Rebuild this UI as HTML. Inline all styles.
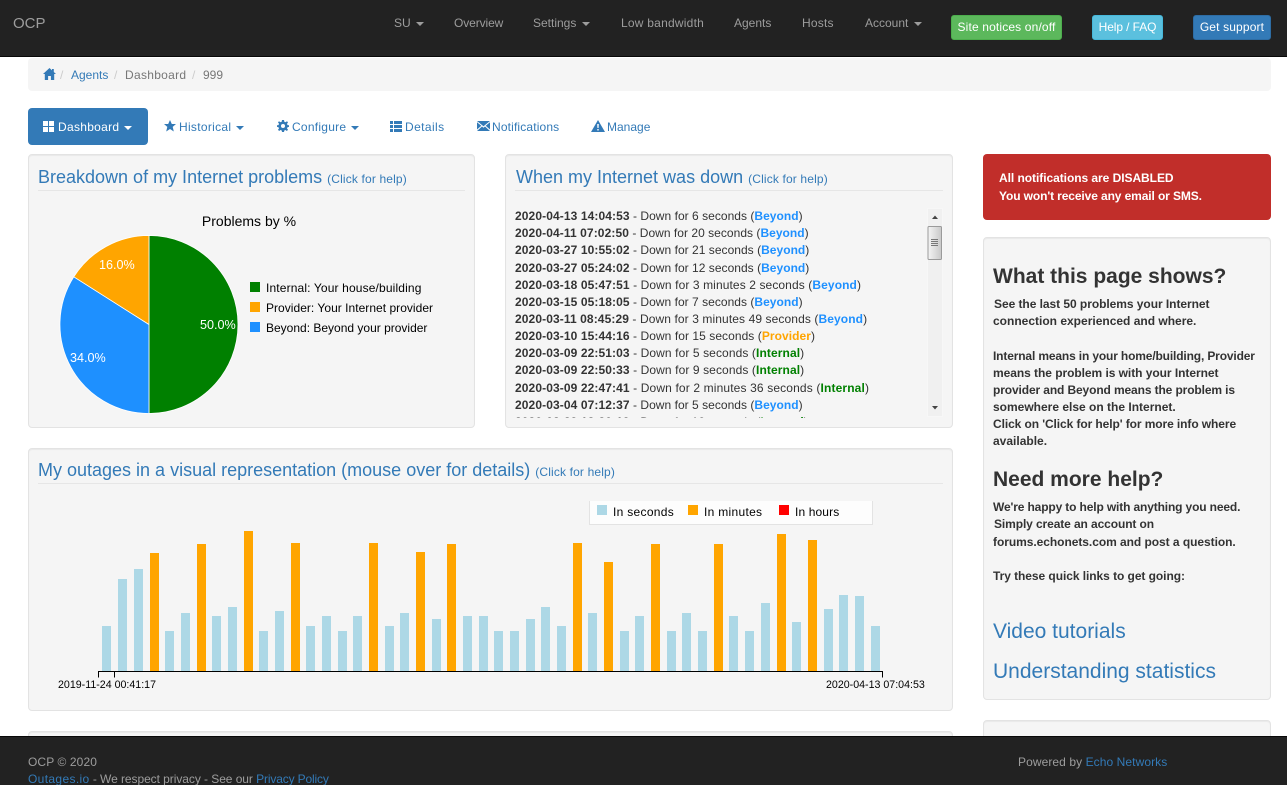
<!DOCTYPE html>
<html lang="en"><head><meta charset="utf-8"><title>OCP Dashboard</title>
<style>
*{box-sizing:border-box}
html,body{margin:0;padding:0;width:1287px;height:785px;overflow:hidden;background:#fff}
body{font-family:"Liberation Sans",Arial,sans-serif;font-size:12px;color:#333;position:relative}
.t{position:absolute;white-space:nowrap;line-height:17px}
a,.l{color:#337ab7;text-decoration:none}
.nav{position:absolute;left:0;top:0;width:1287px;height:57px;background:#222;border-bottom:1px solid #080808}
.nl{position:absolute;top:15px;color:#9d9d9d;font-size:12px;line-height:17px;white-space:nowrap}
.caret{display:inline-block;width:0;height:0;margin-left:2px;vertical-align:middle;border-top:4px solid;border-left:4px solid transparent;border-right:4px solid transparent}
.btn{position:absolute;top:15px;height:25px;border-radius:3px;color:#fff;font-size:12px;line-height:23px;text-align:center;border:1px solid;white-space:nowrap}
.crumb{position:absolute;left:28px;top:58px;width:1243px;height:33px;background:#f5f5f5;border-radius:4px}
.well{position:absolute;background:#f5f5f5;border:1px solid #e3e3e3;border-radius:4px;box-shadow:inset 0 1px 1px rgba(0,0,0,.05)}
.h{position:absolute;font-size:18px;line-height:20px;color:#337ab7;white-space:nowrap}
.h small{font-size:12px;color:#337ab7;letter-spacing:.15px}
.hr{position:absolute;height:1px;background:#e6e6e6}
.row{position:absolute;left:0;white-space:nowrap;line-height:17px;color:#333}
.row b{color:#333;letter-spacing:.1px}.B{color:#1e90ff;font-weight:bold}.P{color:#ffa500;font-weight:bold}.I{color:#008000;font-weight:bold}
.side{position:absolute;left:993px;white-space:nowrap;font-weight:bold;line-height:17px;color:#333}
.foot{position:absolute;left:0;top:736px;width:1287px;height:49px;background:#222;border-top:1px solid #080808}
.foot .t{color:#9d9d9d}
</style></head><body>

<div class="nav">
<div class="t" style="left:13px;top:14px;font-size:15px;line-height:20px;color:#9d9d9d">OCP</div>
<div class="nl" style="left:394px">SU <span class="caret"></span></div>
<div class="nl" style="left:454px;letter-spacing:-.1px">Overview</div>
<div class="nl" style="left:533px">Settings <span class="caret"></span></div>
<div class="nl" style="left:621px;letter-spacing:.23px">Low bandwidth</div>
<div class="nl" style="left:734px">Agents</div>
<div class="nl" style="left:802px;letter-spacing:.2px">Hosts</div>
<div class="nl" style="left:865px">Account <span class="caret"></span></div>
<div class="btn" style="left:951px;width:111px;background:#5cb85c;border-color:#4cae4c;letter-spacing:.15px">Site notices on/off</div>
<div class="btn" style="left:1092px;width:71px;background:#5bc0de;border-color:#46b8da;letter-spacing:-.1px">Help / FAQ</div>
<div class="btn" style="left:1193px;width:78px;background:#337ab7;border-color:#2e6da4;letter-spacing:.15px">Get support</div>
</div>

<div class="crumb"></div>
<svg style="position:absolute;left:43px;top:68px" width="13" height="12" viewBox="0 0 13 12"><path fill="#337ab7" d="M6.500 0L0 6h1.800v6h3.300V8h2.800v4h3.300V6H13L10.800 4V1H9v1.400z"/></svg>
<div class="t" style="left:60px;top:66.500px;color:#ccc">/</div>
<div class="t" style="left:71px;top:66.500px;color:#337ab7">Agents</div>
<div class="t" style="left:114px;top:66.500px;color:#ccc">/</div>
<div class="t" style="left:125px;top:66.500px;color:#777;letter-spacing:.3px">Dashboard</div>
<div class="t" style="left:192px;top:66.500px;color:#ccc">/</div>
<div class="t" style="left:203px;top:66.500px;color:#777">999</div>

<div style="position:absolute;left:28px;top:108px;width:120px;height:37px;background:#337ab7;border-radius:4px"></div>
<svg style="position:absolute;left:43px;top:121px" width="11" height="11" viewBox="0 0 11 11"><path fill="#fff" d="M0 0h5v5H0zM6 0h5v5H6zM0 6h5v5H0zM6 6h5v5H6z"/></svg>
<div class="t" style="left:58px;top:119px;color:#fff;letter-spacing:.3px">Dashboard <span class="caret" style="margin-left:1px"></span></div>
<svg style="position:absolute;left:164px;top:120px" width="12" height="12" viewBox="0 0 12 12"><path fill="#337ab7" d="M6 0l1.800 4H12L8.700 6.900 9.800 11.500 6 9 2.200 11.500 3.300 6.900 0 4h4.200z"/></svg>
<div class="t" style="left:179px;top:119px;color:#337ab7;letter-spacing:.3px">Historical <span class="caret" style="margin-left:1px"></span></div>
<svg style="position:absolute;left:277px;top:120px" width="12" height="12" viewBox="0 0 12 12"><path fill="#337ab7" fill-rule="evenodd" d="M5 0h2l.3 1.700 1.300.5L10 1.200 11 2.400l-1 1.400.5 1.300L12 5.300v1.600l-1.500.3-.5 1.200 1 1.400L9.900 11l-1.400-1-1.200.5L7 12H5l-.3-1.500L3.500 10l-1.400 1L1 9.800l1-1.400-.5-1.200L0 6.900V5.300l1.500-.2.500-1.300-1-1.400 1-1.200 1.400 1 1.300-.5zM6 4a2 2 0 100 4 2 2 0 000-4z"/></svg>
<div class="t" style="left:292px;top:119px;color:#337ab7;letter-spacing:.25px">Configure <span class="caret" style="margin-left:1px"></span></div>
<svg style="position:absolute;left:390px;top:121px" width="12" height="11" viewBox="0 0 12 11"><path fill="#337ab7" d="M0 0h3v3H0zM4 0h8v3H4zM0 4h3v3H0zM4 4h8v3H4zM0 8h3v3H0zM4 8h8v3H4z"/></svg>
<div class="t" style="left:405px;top:119px;color:#337ab7;letter-spacing:.4px">Details</div>
<svg style="position:absolute;left:477px;top:121px" width="13" height="10" viewBox="0 0 13 10"><path fill="#337ab7" d="M0 0h13L6.500 5.300zM0 1.300v7.200l4.300-3.700zM13 1.300v7.200L8.700 4.800zM0 10l5-4.500 1.500 1.200L8 5.500 13 10z"/></svg>
<div class="t" style="left:492px;top:119px;color:#337ab7;letter-spacing:.15px">Notifications</div>
<svg style="position:absolute;left:591px;top:120px" width="14" height="12" viewBox="0 0 14 12"><path fill="#337ab7" fill-rule="evenodd" d="M7 0l7 12H0zM6.200 4l.2 4h1.200l.2-4zM6.300 9v1.500h1.400V9z"/></svg>
<div class="t" style="left:607px;top:119px;color:#337ab7">Manage</div>

<!-- Breakdown well -->
<div class="well" style="left:28px;top:154px;width:447px;height:274px"></div>
<div class="h" style="left:38px;top:167px">Breakdown of my Internet problems <small>(Click for help)</small></div>
<div class="hr" style="left:38px;top:190px;width:427px"></div>
<svg style="position:absolute;left:28px;top:190px;overflow:visible" width="447" height="238">
<text x="221" y="36" text-anchor="middle" font-family="Liberation Sans" font-size="14" fill="#000">Problems by %</text>
<path d="M121 134.500V45.500A89 89 0 0 1 121 223.500Z" fill="#008000" stroke="#fff" stroke-width=".8"/>
<path d="M121 134.500V223.500A89 89 0 0 1 45.800 86.800Z" fill="#1e90ff" stroke="#fff" stroke-width=".8"/>
<path d="M121 134.500L45.800 86.800A89 89 0 0 1 121 45.500Z" fill="#ffa500" stroke="#fff" stroke-width=".8"/>
<g font-family="Liberation Sans" font-size="12.600" fill="#fff">
<text x="172" y="139">50.0%</text><text x="42" y="172">34.0%</text><text x="71" y="79">16.0%</text>
</g>
<rect x="222" y="92" width="10" height="10" fill="#008000"/><rect x="222" y="112" width="10" height="10" fill="#ffa500"/><rect x="222" y="132" width="10" height="10" fill="#1e90ff"/>
<g font-family="Liberation Sans" font-size="12" fill="#000">
<text x="238" y="102" letter-spacing=".14">Internal: Your house/building</text>
<text x="238" y="122" letter-spacing=".03">Provider: Your Internet provider</text>
<text x="238" y="142">Beyond: Beyond your provider</text>
</g>
</svg>

<!-- Down list well -->
<div class="well" style="left:505px;top:154px;width:448px;height:274px"></div>
<div class="h" style="left:516px;top:167px">When my Internet was down <small>(Click for help)</small></div>
<div class="hr" style="left:515px;top:190px;width:428px"></div>
<div style="position:absolute;left:515px;top:208px;width:412px;height:210px;overflow:hidden">
<div class="row" style="top:0;letter-spacing:.03px"><b>2020-04-13 14:04:53</b> - Down for 6 seconds (<span class="B">Beyond</span>)</div>
<div class="row" style="top:17px;letter-spacing:.03px"><b>2020-04-11 07:02:50</b> - Down for 20 seconds (<span class="B">Beyond</span>)</div>
<div class="row" style="top:34px;letter-spacing:.03px"><b>2020-03-27 10:55:02</b> - Down for 21 seconds (<span class="B">Beyond</span>)</div>
<div class="row" style="top:52px;letter-spacing:.03px"><b>2020-03-27 05:24:02</b> - Down for 12 seconds (<span class="B">Beyond</span>)</div>
<div class="row" style="top:69px;letter-spacing:.1px"><b>2020-03-18 05:47:51</b> - Down for 3 minutes 2 seconds (<span class="B">Beyond</span>)</div>
<div class="row" style="top:86px;letter-spacing:.03px"><b>2020-03-15 05:18:05</b> - Down for 7 seconds (<span class="B">Beyond</span>)</div>
<div class="row" style="top:103px;letter-spacing:.1px"><b>2020-03-11 08:45:29</b> - Down for 3 minutes 49 seconds (<span class="B">Beyond</span>)</div>
<div class="row" style="top:120px;letter-spacing:.06px"><b>2020-03-10 15:44:16</b> - Down for 15 seconds (<span class="P">Provider</span>)</div>
<div class="row" style="top:137px;letter-spacing:.1px"><b>2020-03-09 22:51:03</b> - Down for 5 seconds (<span class="I">Internal</span>)</div>
<div class="row" style="top:154px;letter-spacing:.1px"><b>2020-03-09 22:50:33</b> - Down for 9 seconds (<span class="I">Internal</span>)</div>
<div class="row" style="top:172px;letter-spacing:.14px"><b>2020-03-09 22:47:41</b> - Down for 2 minutes 36 seconds (<span class="I">Internal</span>)</div>
<div class="row" style="top:189px;letter-spacing:.03px"><b>2020-03-04 07:12:37</b> - Down for 5 seconds (<span class="B">Beyond</span>)</div>
<div class="row" style="top:206px"><b>2020-02-29 18:30:19</b> - Down for 10 seconds (<span class="I">Internal</span>)</div>
</div>
<svg style="position:absolute;left:927px;top:208px" width="16" height="209" viewBox="0 0 16 209">
<defs><linearGradient id="th" x1="0" x2="1" y1="0" y2="0"><stop offset="0" stop-color="#f4f4f4"/><stop offset="1" stop-color="#c8c8c8"/></linearGradient></defs>
<rect width="16" height="209" fill="#f0f0f0"/><rect x=".5" y=".5" width="15" height="208" fill="none" stroke="#f7f7f7"/>
<path d="M5 11h6L8 7.500zM5 198h6l-3 3.500z" fill="#444"/>
<rect x="1" y="18.500" width="13.500" height="33" rx="1" fill="url(#th)" stroke="#9a9a9a"/>
<path d="M4 31.500h7M4 33.500h7M4 35.500h7M4 37.500h7" stroke="#777" stroke-width="1"/>
</svg>

<!-- Outages well -->
<div class="well" style="left:28px;top:448px;width:925px;height:263px"></div>
<div class="h" style="left:38px;top:460px">My outages in a visual representation (mouse over for details) <small>(Click for help)</small></div>
<div class="hr" style="left:38px;top:483px;width:905px"></div>
<svg style="position:absolute;left:0;top:490px;overflow:visible" width="960" height="220">
<g fill="#add8e6">
<rect x="102" y="136" width="9" height="45"/><rect x="118" y="89" width="9" height="92"/><rect x="134" y="79" width="9" height="102"/>
<rect x="165" y="141" width="9" height="40"/><rect x="181" y="123" width="9" height="58"/><rect x="212" y="126" width="9" height="55"/><rect x="228" y="117" width="9" height="64"/>
<rect x="259" y="141" width="9" height="40"/><rect x="275" y="121" width="9" height="60"/><rect x="306" y="136" width="9" height="45"/><rect x="322" y="126" width="9" height="55"/><rect x="338" y="141" width="9" height="40"/><rect x="353" y="126" width="9" height="55"/>
<rect x="385" y="136" width="9" height="45"/><rect x="400" y="123" width="9" height="58"/><rect x="432" y="129" width="9" height="52"/><rect x="463" y="126" width="9" height="55"/><rect x="479" y="126" width="9" height="55"/><rect x="494" y="141" width="9" height="40"/><rect x="510" y="141" width="9" height="40"/><rect x="526" y="129" width="9" height="52"/><rect x="541" y="117" width="9" height="64"/><rect x="557" y="136" width="9" height="45"/>
<rect x="588" y="123" width="9" height="58"/><rect x="620" y="141" width="9" height="40"/><rect x="635" y="126" width="9" height="55"/><rect x="667" y="141" width="9" height="40"/><rect x="682" y="123" width="9" height="58"/><rect x="698" y="141" width="9" height="40"/><rect x="729" y="126" width="9" height="55"/><rect x="745" y="141" width="9" height="40"/><rect x="761" y="113" width="9" height="68"/><rect x="792" y="132" width="9" height="49"/><rect x="824" y="119" width="9" height="62"/><rect x="839" y="105" width="9" height="76"/><rect x="855" y="106" width="9" height="75"/><rect x="871" y="136" width="9" height="45"/>
</g>
<g fill="#ffa500">
<rect x="150" y="63" width="9" height="118"/><rect x="197" y="54" width="9" height="127"/><rect x="244" y="41" width="9" height="140"/><rect x="291" y="53" width="9" height="128"/><rect x="369" y="53" width="9" height="128"/><rect x="416" y="62" width="9" height="119"/><rect x="447" y="54" width="9" height="127"/><rect x="573" y="53" width="9" height="128"/><rect x="604" y="72" width="9" height="109"/><rect x="651" y="54" width="9" height="127"/><rect x="714" y="54" width="9" height="127"/><rect x="777" y="44" width="9" height="137"/><rect x="808" y="50" width="9" height="131"/>
</g>
<path d="M98.500 187.500v-6H882.500v6M114.500 187.500V181.500" fill="none" stroke="#000" stroke-width="1"/>
<g font-family="Liberation Sans" font-size="10.650" fill="#000">
<text x="58" y="198">2019-11-24 00:41:17</text><text x="826" y="198">2020-04-13 07:04:53</text>
</g>
<rect x="589.500" y="11" width="283" height="23" fill="#fff" fill-opacity=".8"/>
<path d="M589.500 11v23.500H872.500V11" fill="none" stroke="#e3e3e3"/>
<rect x="597" y="15" width="10" height="10" fill="#add8e6"/><rect x="688" y="15" width="10" height="10" fill="#ffa500"/><rect x="779" y="15" width="10" height="10" fill="#f00"/>
<g font-family="Liberation Sans" font-size="12" fill="#000">
<text x="613" y="26" letter-spacing=".3">In seconds</text><text x="704" y="26" letter-spacing=".3">In minutes</text><text x="795" y="26" letter-spacing=".12">In hours</text>
</g>
</svg>

<div class="well" style="left:28px;top:731px;width:925px;height:30px"></div>

<!-- Right column -->
<div style="position:absolute;left:983px;top:154px;width:288px;height:66px;background:#c12e2a;border-radius:4px"></div>
<div class="t" style="left:999px;top:169px;color:#fff;font-weight:bold;line-height:18px;letter-spacing:-.05px">All notifications are DISABLED<br><span style="letter-spacing:-.11px">You won't receive any email or SMS.</span></div>
<div class="well" style="left:983px;top:237px;width:288px;height:463px"></div>
<div class="t" style="left:993px;top:265px;font-size:21px;font-weight:bold;line-height:24px">What this page shows?</div>
<div class="side" style="left:994px;top:296px;letter-spacing:-.05px">See the last 50 problems your Internet</div>
<div class="side" style="top:313px">connection experienced and where.</div>
<div class="side" style="top:348px;letter-spacing:-.15px">Internal means in your home/building, Provider</div>
<div class="side" style="top:365px;letter-spacing:-.05px">means the problem is with your Internet</div>
<div class="side" style="top:382px;letter-spacing:-.12px">provider and Beyond means the problem is</div>
<div class="side" style="top:399px">somewhere else on the Internet.</div>
<div class="side" style="top:416px;letter-spacing:-.09px">Click on 'Click for help' for more info where</div>
<div class="side" style="top:433px">available.</div>
<div class="t" style="left:993px;top:468px;font-size:21px;font-weight:bold;line-height:24px">Need more help?</div>
<div class="side" style="top:499px;letter-spacing:-.14px">We're happy to help with anything you need.</div>
<div class="side" style="left:994px;top:516px;letter-spacing:-.1px">Simply create an account on</div>
<div class="side" style="top:534px;letter-spacing:-.05px">forums.echonets.com and post a question.</div>
<div class="side" style="top:568px;letter-spacing:-.06px">Try these quick links to get going:</div>
<div class="t" style="left:993px;top:620px;font-size:21px;line-height:24px;color:#337ab7">Video tutorials</div>
<div class="t" style="left:993px;top:660px;font-size:21px;line-height:24px;color:#337ab7">Understanding statistics</div>
<div class="well" style="left:983px;top:720px;width:288px;height:40px"></div>

<!-- Footer -->
<div class="foot">
<div class="t" style="left:28px;top:17px;letter-spacing:.1px">OCP © 2020</div>
<div class="t" style="left:28px;top:34px"><span class="l" style="letter-spacing:.35px">Outages.io</span><span style="letter-spacing:-.06px"> - We respect privacy - See our </span><span class="l" style="letter-spacing:-.15px">Privacy Policy</span></div>
<div class="t" style="left:1018px;top:17px;letter-spacing:.08px">Powered by <span class="l">Echo Networks</span></div>
</div>
</body></html>
